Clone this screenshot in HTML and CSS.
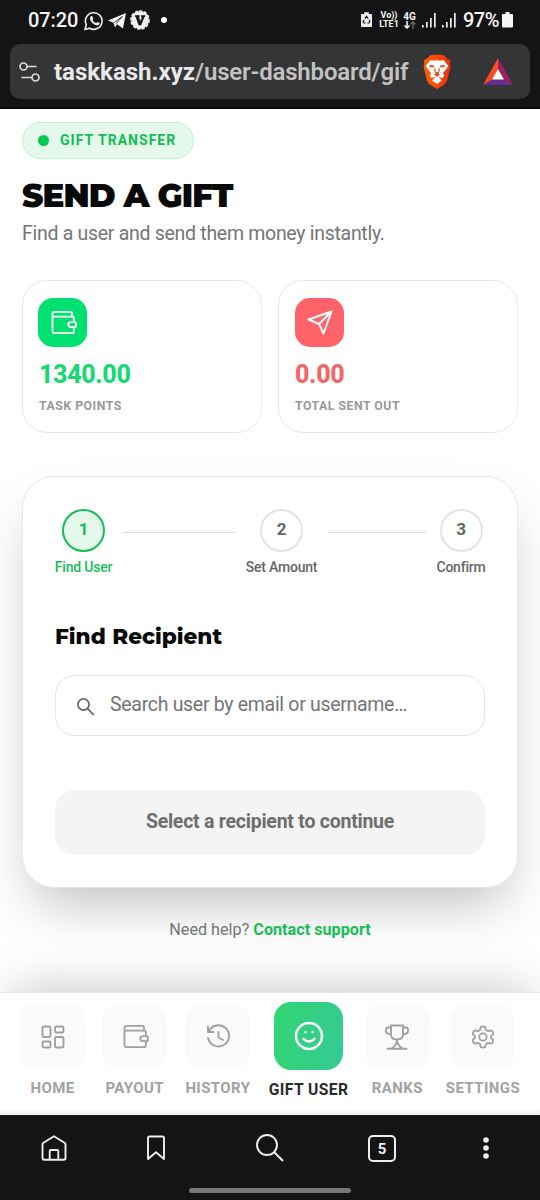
FILE: index.html
```html
<!DOCTYPE html>
<html lang="en">
<head>
<meta charset="utf-8">
<title>Send a Gift</title>
<link rel="stylesheet" href="styles.css">
</head>
<body>
<div class="phone">
  <header class="chrome">
    <div class="status">
      <span class="clock">07:20</span>
      <svg class="st-left" width="66" height="22" viewBox="0 0 66 22" fill="none">
        <path d="M1 19.500 2.300 14.700A8.300 8.300 0 1 1 5.600 18.200Z" stroke="#eee" stroke-width="1.600"/>
        <path d="M6.800 6.500c1.200-1.200 1.900.4 2.400 1.700.2.600-.9 1.300-.6 1.800.8 1.500 2 2.500 3.400 3.100.6.200 1.100-1.400 1.700-1.100 1.200.5 2.400 1 1.800 2-1.500 2.500-4.700 1.100-6.700-.8C6.700 11.300 5 8.700 6.800 6.500Z" fill="#eee"/>
        <path d="M24 10.500 42 3 39 18.500 33 14.200 31 17.500 29.500 12.800Z" fill="#f5f5f5"/><path d="m30 12.600 8.500-6.200-6.300 7.300" stroke="#141414" stroke-width=".8"/>
        <circle cx="56" cy="10" r="8.900" fill="#f0f0f0"/><circle cx="56" cy="10" r="9" stroke="#f0f0f0" stroke-width="1.600" stroke-dasharray="3.200 1.400"/>
        <path d="M51.300 5.500h4v1.200h-.8l2 5 1.800-5h-1V5.500h3.700v1.200h-.8L57 15h-2.200l-2.900-8.300h-.6Z" fill="#141414" stroke="#141414" stroke-width=".6"/>
      </svg>
      <i class="notice"></i>
      <svg class="saver" width="11" height="16" viewBox="0 0 12 17" fill="none"><path d="M3.500 0h5v2H11q1 0 1 1v12q0 1-1 1H1q-1 0-1-1V3q0-1 1-1h2.500Z" fill="#eee"/><path d="m4.300 7 1.700-2.500L7.800 7M8.800 8.600l.9 1.700-1 1.500H7M4.900 11.800H3.200l-1-1.500L3.400 8.400" stroke="#141414" stroke-width="1.200"/></svg>
      <span class="net"><span>Vo))</span><span>LTE1</span></span>
      <span class="net net-4g"><span>4G</span><svg width="12" height="8" viewBox="0 0 12 8" fill="none" stroke-width="1.500"><path d="M3 0v7M.5 4.500 3 7l2.500-2.500" stroke="#fff"/><path d="M9 8V1M6.500 3.500 9 1l2.500 2.500" stroke="#666"/></svg></span>
      <svg class="bars" width="35" height="15" viewBox="0 0 35 15" fill="#eee"><path d="M0 12h1.700v2.500H0zM4 9h1.700v5.500H4zM8 5h1.700v9.500H8zM12 0h1.700v14.500H12z"/><path d="M20 12h1.700v2.500H20zM24 9h1.700v5.500H24zM28 5h1.700v9.500H28zM32 0h1.700v14.500H32z"/></svg>
      <span class="percent">97%</span>
      <svg width="11" height="16" viewBox="0 0 11 16"><path d="M3.500 0h4v2H10q1 0 1 1v11q0 1.500-1 1.500H1q-1 0-1-1.500V3q0-1 1-1h2.500z" fill="#f5f5f5"/></svg>
    </div>
    <div class="urlbar">
      <svg class="tune" width="21" height="20" viewBox="0 0 21 20" fill="none" stroke="#ddd" stroke-width="1.700"><circle cx="4.500" cy="4.500" r="3.500"/><path d="M8 4.500h9.500M2.500 15.500H13"/><circle cx="16.500" cy="15.500" r="3.500"/></svg>
      <div class="url"><b>taskkash.xyz</b>/user-dashboard/gif</div>
      <svg class="brave" width="30" height="36" viewBox="0 0 30 36">
        <defs><linearGradient id="lion"><stop stop-color="#ff6000"/><stop offset="1" stop-color="#f52e10"/></linearGradient></defs>
        <path d="m8 1.500 3-.8h8l3 .8 3 3 3.500 2-1 3 1 3-3.500 14-2 3.500L15 35l-8-5-2-3.500-3.500-14 1-3-1-3 3.500-2Z" fill="url(#lion)"/>
        <path d="m8.500 6 3.500.8L15 6l3 .8 3.500-.8L26 11.500l-.5 2-4.500 5.500 1 3-1.500 2-4-1 3.500 3.500L15 30l-5-3.500 3.500-3.500-4 1L8 22l1-3-4.500-5.500-.5-2Z" fill="#fff"/>
        <path d="m7 11 5 .5.5 1.500L8 13.500ZM23 11l-5 .5-.5 1.500 4.500.5ZM13 13l-1 3 1.500 3.500L12 21l3 1.500 3-1.500-1.500-1.500L18 16l-1-3-.8 5h-2.400Z" fill="#f64a18"/>
      </svg>
      <svg class="bat" width="30" height="28" viewBox="0 0 30 28"><path d="M15 0 0 27l10-6 5-9Z" fill="#ff4b24"/><path d="m15 0 15 27-10-6-5-9Z" fill="#9e1f63"/><path d="M0 27h30l-10-6H10Z" fill="#662d91"/><path d="m15 11 6 10.500H9Z" fill="#fff"/></svg>
    </div>
  </header>

  <main class="page">
    <div class="pill"><i class="dot"></i><span>GIFT TRANSFER</span></div>
    <h1>SEND A GIFT</h1>
    <p class="lead">Find a user and send them money instantly.</p>

    <section class="stats">
      <article class="stat green">
        <div class="badge"><svg width="28" height="28" viewBox="0 0 24 24"><use href="#wallet"/></svg></div>
        <strong>1340.00</strong><small>TASK POINTS</small>
      </article>
      <article class="stat red">
        <div class="badge"><svg width="28" height="28" viewBox="0 0 28 28"><path d="M2.500 10.500 25.500 2.500 17.500 24.500 13 15ZM13 15 25.500 2.500"/></svg></div>
        <strong>0.00</strong><small>TOTAL SENT OUT</small>
      </article>
    </section>

    <section class="card">
      <div class="steps">
        <div class="step active"><b>1</b><span>Find User</span></div>
        <i class="line"></i>
        <div class="step step-amount"><b>2</b><span>Set Amount</span></div>
        <i class="line line-short"></i>
        <div class="step step-confirm"><b>3</b><span>Confirm</span></div>
      </div>
      <h2>Find Recipient</h2>
      <div class="search">
        <svg width="18" height="18" viewBox="0 0 18 18" fill="none" stroke="#666" stroke-width="1.700"><circle cx="6.500" cy="6.500" r="5.600"/><path d="m10.600 10.600 6.200 6.200"/></svg>
        <span>Search user by email or username…</span>
      </div>
      <div class="submit">Select a recipient to continue</div>
    </section>
    <p class="help">Need help? <b>Contact support</b></p>
  </main>

  <nav class="tabs">
    <div class="tab"><div class="tile"><svg width="28" height="28" viewBox="0 0 28 28"><rect x="3.500" y="3.500" width="8" height="10.500" rx="1.500"/><rect x="16" y="3.500" width="8.500" height="6" rx="1.500"/><rect x="3.500" y="18.500" width="8" height="6" rx="1.500"/><rect x="16" y="14" width="8.500" height="10.500" rx="1.500"/></svg></div><span>HOME</span></div>
    <div class="tab"><div class="tile"><svg width="28" height="28" viewBox="0 0 24 24"><use href="#wallet"/></svg></div><span>PAYOUT</span></div>
    <div class="tab history"><div class="tile"><svg width="28" height="28" viewBox="0 0 28 28"><path d="M4 3.500V9H9.500M4.800 8.500A10.600 10.600 0 1 1 4.100 15M14.500 9V14.500l4.500 2.500"/></svg></div><span>HISTORY</span></div>
    <div class="tab current"><div class="tile"><svg width="32" height="32" viewBox="0 0 32 32"><circle cx="16" cy="16" r="13"/><path d="M10.500 18.800q5.500 5.400 11 0M12.300 12h.1M19.600 12h.1"/></svg></div><span>GIFT USER</span></div>
    <div class="tab ranks"><div class="tile"><svg width="28" height="28" viewBox="0 0 28 28"><path d="M8 2.500h12v9q0 5-6 5t-6-5ZM8 4.500H5q-2 0-2 2v1.500q0 3 5 3M20 4.500h3q2 0 2 2v1.500q0 3-5 3M14 16.500Q14 22 8.500 25.500M14 16.500Q14 22 19.500 25.500M4.500 25.700h19"/></svg></div><span>RANKS</span></div>
    <div class="tab settings"><div class="tile"><svg width="26" height="26" viewBox="0 0 28 28"><circle cx="14" cy="14" r="4"/><path d="M11.600 3.200q2.400-1.400 4.800 0l.9 3.300 2 1.200 3.400-.9q2.400 1.300 2.400 4.100l-2.500 2.200v1.800l2.500 2.200q0 2.800-2.400 4.100l-3.400-.9-2 1.200-.9 3.300q-2.400 1.400-4.800 0l-.9-3.300-2-1.200-3.400.9q-2.400-1.300-2.400-4.100l2.500-2.200v-1.800L2.900 10.900q0-2.800 2.400-4.100l3.400.9 2-1.200Z"/></svg></div><span>SETTINGS</span></div>
  </nav>

  <footer class="browser">
    <div class="actions">
      <svg width="28" height="28" viewBox="0 0 28 28"><path d="M2.500 10.500q0-1.200 1-1.800L14 2.300l10.500 6.400q1 .6 1 1.800V24q0 1.700-1.700 1.700H4.200Q2.500 25.700 2.500 24ZM9.700 25.500V17q0-1 1-1h6.600q1 0 1 1v8.500"/></svg>
      <svg class="saved" width="20" height="28" viewBox="0 0 20 28"><path d="M2 4q0-1.500 1.500-1.500h13Q18 2.500 18 4v21l-8-6.700L2 25Z"/></svg>
      <svg class="find" width="30" height="30" viewBox="0 0 30 30"><circle cx="12" cy="12" r="10"/><path d="m19 19 9 9"/></svg>
      <div class="count">5</div>
      <svg class="more" width="6" height="24" viewBox="0 0 6 24"><circle cx="3" cy="4" r="2.800"/><circle cx="3" cy="12" r="2.800"/><circle cx="3" cy="20" r="2.800"/></svg>
    </div>
    <div class="handle"></div>
  </footer>
</div>

<svg width="0" height="0" class="defs"><defs><g id="wallet"><path d="M19.700 6.500V3.700q0-1.200-1.200-1.200H4.500Q3 2.500 3 4.200v14.700q0 1.800 1.800 1.800h14.900q1.600 0 1.600-1.600V15.500M3 6.500h17.100q1.200 0 1.200 1.200v3.500M22.300 11.200h-3.500q-2.300 0-2.300 2.100t2.300 2.200h3.500q.7 0 .7-.8v-2.700q0-.8-.7-.8Z"/></g></defs></svg>
</body>
</html>
```
FILE: styles.css
```css
* { box-sizing: border-box; }
body { margin: 0; background: #fff; font-family: Roboto, sans-serif; }
h1, h2, p { margin: 0; }
svg { display: block; flex: none; }
.defs { position: absolute; }
.phone { width: 540px; height: 1200px; display: flex; flex-direction: column; overflow: hidden; }

.chrome { height: 109px; background: #141414; flex: none; padding: 0 10px; border-bottom: 1px solid #000; }
.status { height: 44px; display: flex; align-items: center; padding: 0 17px 4px 18px; color: #f5f5f5; }
.clock { font-size: 20px; font-weight: 500; width: 55px; white-space: nowrap; letter-spacing: -.1px; }
.st-left { margin: 1px 0 0 1px; }
.notice { width: 6px; height: 6px; border-radius: 50%; background: #fff; margin-left: 11px; }
.saver { margin-left: auto; }
.net { display: flex; flex-direction: column; align-items: center; width: 20px; margin-left: 7px; font-size: 9px; line-height: 9px; font-weight: 700; }
.net-4g { width: 13px; margin-left: 4px; font-size: 10px; }
.bars { margin-left: 6px; }
.percent { font-size: 20px; font-weight: 500; margin: 0 3px 0 6px; width: 36px; letter-spacing: -.5px; }
.urlbar { height: 55px; border-radius: 10px; background: #343537; display: flex; align-items: center; padding-left: 9px; }
.url { width: 356px; margin-left: 14px; white-space: nowrap; font-size: 24px; line-height: 32px; font-weight: 600; letter-spacing: -.18px; color: #c2c2c2; }
.url b { color: #e8e8e8; font-weight: 700; letter-spacing: 0; }
.brave { margin-left: 12px; }
.bat { margin-left: 31px; }

.page { flex: 1; min-height: 0; padding: 13px 22px 0; }
.pill { width: 172px; height: 37px; border: 1px solid #c3f0d3; border-radius: 19px; background: #e4f9eb; display: flex; align-items: center; padding-left: 15px; gap: 11px; color: #14bd53; font-size: 14px; font-weight: 700; letter-spacing: 1.020px; white-space: nowrap; }
.pill span { margin-top: -2px; }
.dot { width: 11px; height: 11px; border-radius: 50%; background: #00c853; }
h1 { margin-top: 17px; height: 40px; line-height: 40px; font-family: Montserrat, Inter, sans-serif; font-size: 32.500px; font-weight: 900; letter-spacing: -.9px; color: #090909; white-space: nowrap; }
.lead { margin-top: 4px; font-size: 19.500px; line-height: 27px; letter-spacing: -.29px; color: #757575; white-space: nowrap; }
.stats { margin-top: 33px; display: grid; grid-template-columns: 240px 240px; gap: 16px; }
.stat { height: 153px; border: 1px solid #e8e8e8; border-radius: 25px; padding: 17px 16px 0; }
.badge { width: 49px; height: 49px; border-radius: 15px; display: grid; place-items: center; }
.badge svg { fill: none; stroke: #fff; stroke-width: 2; stroke-linejoin: round; stroke-linecap: round; }
.badge svg use { stroke-width: 1.600; }
.green .badge { background: #00e070; margin-left: -1px; }
.red .badge { background: #ff6268; }
.stat strong { display: block; margin-top: 12px; font-size: 25px; line-height: 32px; font-weight: 800; letter-spacing: -.35px; }
.green strong { color: #18d873; }
.red strong { color: #f56469; }
.stat small { display: block; margin-top: 8px; font-size: 12.300px; line-height: 14px; font-weight: 700; color: #999; letter-spacing: .5px; white-space: nowrap; }

.card { margin-top: 43px; height: 412px; border: 1px solid #e8e8e8; border-radius: 32px; padding: 32px; background: #fff; box-shadow: 0 27px 53px -12px rgba(0,0,0,.25); }
.steps { display: flex; justify-content: space-between; align-items: flex-start; height: 68px; }
.step { width: 57px; display: flex; flex-direction: column; align-items: center; color: #666; font-size: 14px; line-height: 18px; font-weight: 500; letter-spacing: -.2px; white-space: nowrap; }
.step-amount { width: 71px; }
.step-confirm { width: 48px; }
.step b { width: 43px; height: 43px; border: 2px solid #e4e4e4; border-radius: 50%; font-size: 17px; line-height: 37px; text-align: center; margin-bottom: 6px; }
.step.active { color: #18bd58; }
.step.active b { border-color: #18bd58; background: #e4f9eb; }
.line { height: 1px; width: 112px; background: #dedede; margin-top: 23px; }
.line-short { width: 98px; }
h2 { margin-top: 44px; height: 30px; line-height: 30px; font-family: Montserrat, Inter, sans-serif; font-size: 21.600px; font-weight: 800; color: #090909; white-space: nowrap; }
.search { margin-top: 24px; height: 61px; border: 1px solid #e6e6e6; border-radius: 20px; display: flex; align-items: center; padding-left: 21px; font-size: 19.500px; letter-spacing: -.3px; color: #757575; white-space: nowrap; }
.search svg { margin-top: 2px; }
.search span { margin: -3px 0 0 15px; }
.submit { margin-top: 54px; height: 65px; border-radius: 20px; background: #f4f4f4; color: #6e6e6e; font-size: 19.500px; line-height: 63px; font-weight: 700; letter-spacing: -.24px; text-align: center; white-space: nowrap; }
.help { margin-top: 31px; text-align: center; font-size: 16.200px; line-height: 22px; color: #757575; white-space: nowrap; }
.help b { color: #18bd58; font-weight: 700; }

.tabs { position: relative; height: 123px; flex: none; border-top: 1px solid #e9e9e9; background: linear-gradient(#fff 115px, #eee); display: flex; justify-content: space-between; padding: 9px 20px 0; box-shadow: 0 -12px 50px -12px rgba(0,0,0,.25); }
.tab { width: 65px; display: flex; flex-direction: column; align-items: center; padding-top: 2px; color: #a2a2a2; font-size: 15px; line-height: 20px; font-weight: 700; letter-spacing: .4px; white-space: nowrap; }
.tile { width: 65px; height: 65px; border-radius: 17px; background: #fafafa; display: grid; place-items: center; margin-bottom: 9px; }
.tile svg { fill: none; stroke: #a0a0a0; stroke-width: 1.900; stroke-linecap: round; stroke-linejoin: round; }
.tile svg use { stroke-width: 1.600; }
.history { width: 67px; }
.current { width: 80px; padding-top: 0; color: #2b2b2b; font-size: 15.700px; letter-spacing: .4px; }
.current .tile { width: 69px; height: 68px; background: linear-gradient(100deg, #32d671, #34ca96); margin-bottom: 10px; }
.current .tile svg { stroke: #fff; stroke-width: 2.500; }
.ranks { width: 63px; }
.settings { width: 74px; }

.browser { position: relative; height: 85px; flex: none; background: #141414; }
.actions { height: 73px; padding: 0 0 7px 40px; display: flex; align-items: center; }
.actions svg { fill: none; stroke: #eee; stroke-width: 1.900; stroke-linejoin: round; }
.actions .saved { margin-left: 78px; }
.actions .find { margin: 0 83px 0 89px; }
.actions .more { fill: #eee; stroke: none; margin-left: 87px; }
.count { width: 28px; height: 27px; border: 2px solid #eee; border-radius: 5px; color: #eee; font-size: 15px; line-height: 24px; font-weight: 700; text-align: center; }
.handle { width: 162px; height: 5px; border-radius: 3px; background: #777; margin: 0 auto; }
```
